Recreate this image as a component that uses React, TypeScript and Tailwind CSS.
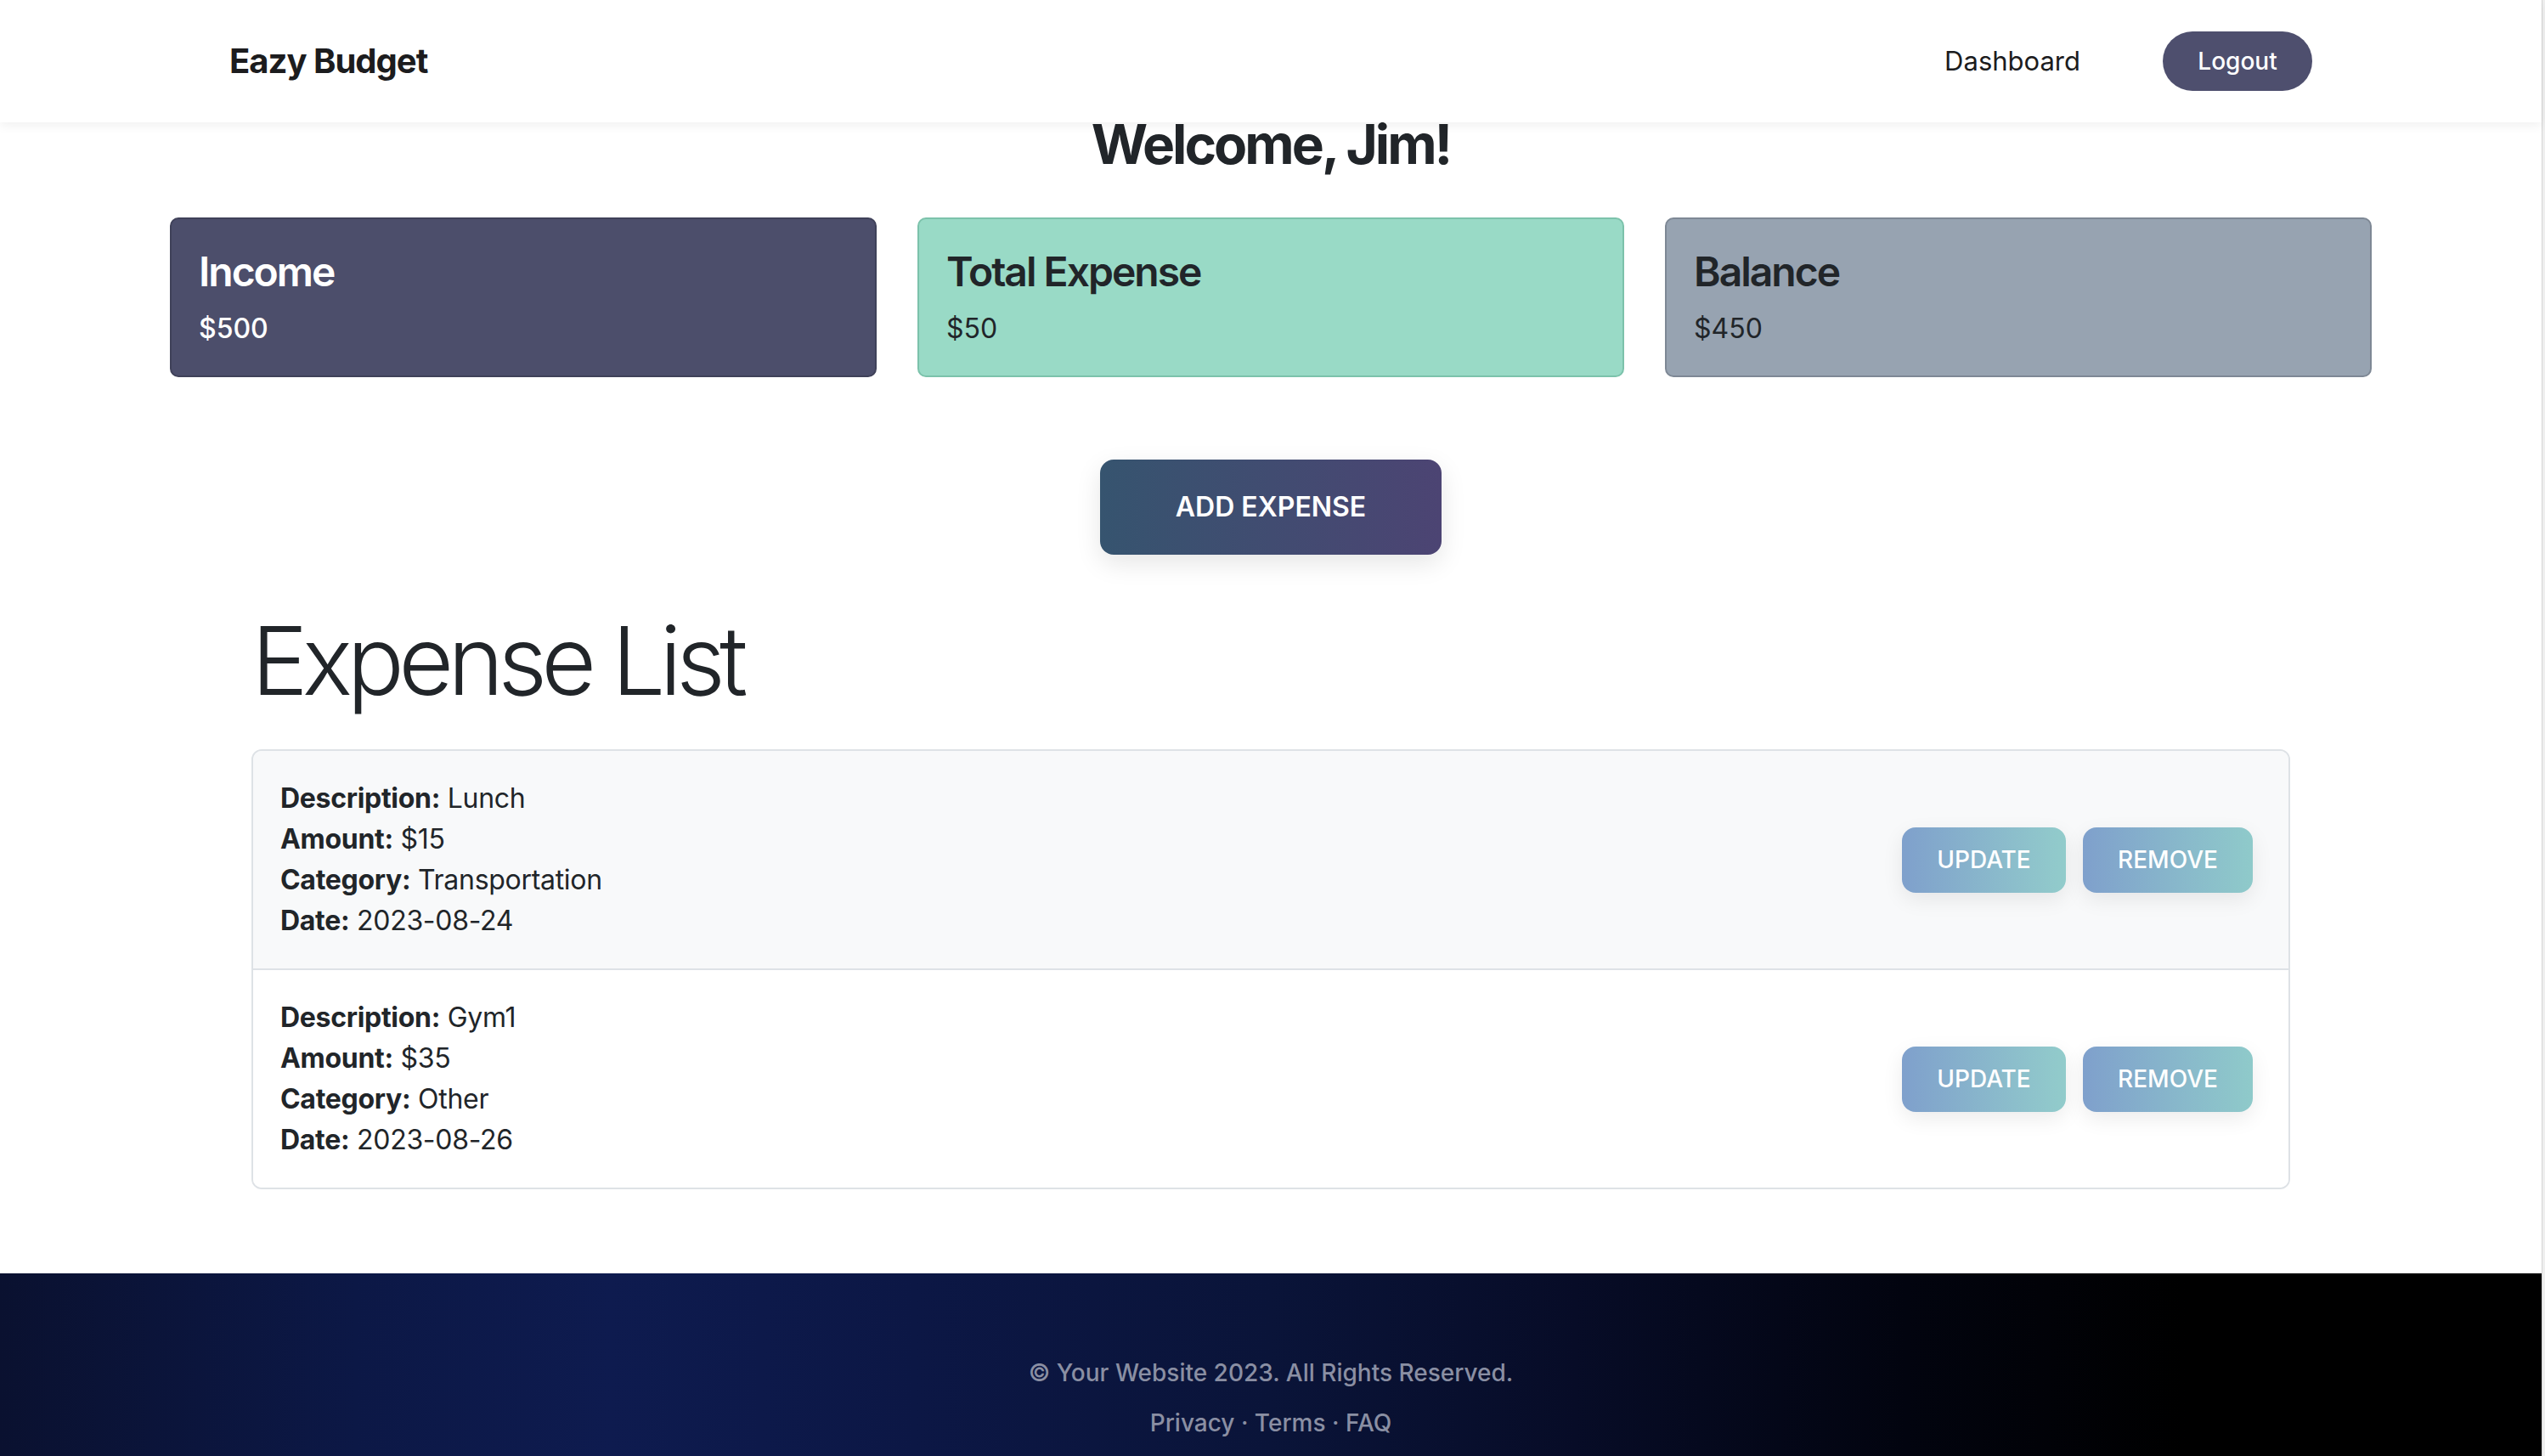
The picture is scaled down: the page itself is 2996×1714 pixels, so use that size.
import React from "react";

const font = { fontFamily: "Inter, 'Noto Sans', sans-serif" };

function ExpenseRow({
  desc,
  amount,
  category,
  date,
  bg,
  last,
}: {
  desc: string;
  amount: string;
  category: string;
  date: string;
  bg: string;
  last?: boolean;
}) {
  return (
    <div
      className={`flex items-center justify-between px-[32px] py-[32px] ${bg} ${
        last ? "" : "border-b-2 border-[#dee2e6]"
      }`}
    >
      <div className="text-[32px] leading-[48px] text-[#212529] tracking-[-0.3px]">
        <div>
          <span className="font-bold">Description:</span> {desc}
        </div>
        <div>
          <span className="font-bold">Amount:</span> {amount}
        </div>
        <div>
          <span className="font-bold">Category:</span> {category}
        </div>
        <div>
          <span className="font-bold">Date:</span> {date}
        </div>
      </div>
      <div className="flex items-center gap-[20px] mr-[10px]">
        <button className="h-[77px] w-[193px] rounded-[16px] bg-[linear-gradient(to_right,#7fa0cc,#92cccb)] text-[28px] font-medium text-white shadow-[0_8px_24px_rgba(0,0,0,0.08)]">
          UPDATE
        </button>
        <button className="h-[77px] w-[200px] rounded-[16px] bg-[linear-gradient(to_right,#7fa0cc,#8fcaca)] text-[28px] font-medium text-white shadow-[0_8px_24px_rgba(0,0,0,0.08)]">
          REMOVE
        </button>
      </div>
    </div>
  );
}

export default function App() {
  return (
    <div className="flex w-full min-h-[1714px] bg-white" style={font}>
      <div className="flex-1 flex flex-col min-w-0">
        {/* Navbar */}
        <nav className="relative z-10 h-[144px] bg-white shadow-[0_4px_12px_rgba(0,0,0,0.06)] flex items-center justify-between px-[270px]">
          <div className="text-[40px] font-bold text-[#1c1c1e] tracking-[-1px]">
            Eazy Budget
          </div>
          <div className="flex items-center gap-[97px]">
            <span className="text-[31px] text-[#1c1c1e]">Dashboard</span>
            <button className="h-[70px] w-[176px] rounded-full bg-[#4e4f6e] text-[28px] font-medium text-white">
              Logout
            </button>
          </div>
        </nav>

        {/* Main */}
        <main className="relative -mt-[13px] flex-1">
          <h2 className="text-center text-[64px] leading-[77px] font-bold text-[#212529] tracking-[-3px]">
            Welcome, Jim!
          </h2>

          <div className="mx-auto max-w-[2640px] px-[24px] mt-[48px]">
            <div className="grid grid-cols-3 gap-[48px]">
              <div className="h-[188px] rounded-[10px] border-2 border-[#3f4159] bg-[#4c4e6b] px-[32px] pt-[33px]">
                <h4 className="text-[48px] leading-[58px] font-semibold text-white tracking-[-2px]">
                  Income
                </h4>
                <p className="mt-[14px] text-[32px] leading-[48px] font-medium text-white">
                  $500
                </p>
              </div>
              <div className="h-[188px] rounded-[10px] border-2 border-[#7cc2ab] bg-[#99dac6] px-[32px] pt-[33px]">
                <h4 className="text-[48px] leading-[58px] font-semibold text-[#212529] tracking-[-2px]">
                  Total Expense
                </h4>
                <p className="mt-[14px] text-[32px] leading-[48px] text-[#212529]">
                  $50
                </p>
              </div>
              <div className="h-[188px] rounded-[10px] border-2 border-[#7e8895] bg-[#97a3b1] px-[32px] pt-[33px]">
                <h4 className="text-[48px] leading-[58px] font-semibold text-[#212529] tracking-[-2px]">
                  Balance
                </h4>
                <p className="mt-[14px] text-[32px] leading-[48px] text-[#212529]">
                  $450
                </p>
              </div>
            </div>
          </div>

          <div className="flex justify-center mt-[97px]">
            <button className="h-[112px] w-[402px] rounded-[16px] bg-[linear-gradient(to_right,#36546f,#4c4473)] text-[32px] font-semibold text-white shadow-[0_10px_30px_rgba(0,0,0,0.10)]">
              ADD EXPENSE
            </button>
          </div>

          <div className="mx-auto w-[2400px] mt-[57px]">
            <h1 className="text-[112px] leading-[134px] font-light text-[#212529] tracking-[-6.8px]">
              Expense List
            </h1>
            <div className="mt-[38px] overflow-hidden rounded-[12px] border-2 border-[#dee2e6]">
              <ExpenseRow
                desc="Lunch"
                amount="$15"
                category="Transportation"
                date="2023-08-24"
                bg="bg-[#f8f9fa]"
              />
              <ExpenseRow
                desc="Gym1"
                amount="$35"
                category="Other"
                date="2023-08-26"
                bg="bg-white"
                last
              />
            </div>
          </div>
        </main>

        {/* Footer */}
        <footer className="mt-[98px] h-[215px] bg-[linear-gradient(to_right,#0a1130_0%,#0c1846_14%,#0e1b4f_24%,#0c1745_36%,#0a1439_50%,#070c27_62%,#02040f_75%,#000000_86%)] pt-[96px] text-center">
          <p className="text-[28px] leading-[42px] font-medium text-[#8a8fa3]">
            © Your Website 2023. All Rights Reserved.
          </p>
          <p className="mt-[17px] text-[28px] leading-[42px] font-medium text-[#8a8fa3]">
            Privacy · Terms · FAQ
          </p>
        </footer>
      </div>
      <div className="w-[4px] shrink-0 border-l border-[#d6d6d6] bg-[#efefef]" />
    </div>
  );
}
